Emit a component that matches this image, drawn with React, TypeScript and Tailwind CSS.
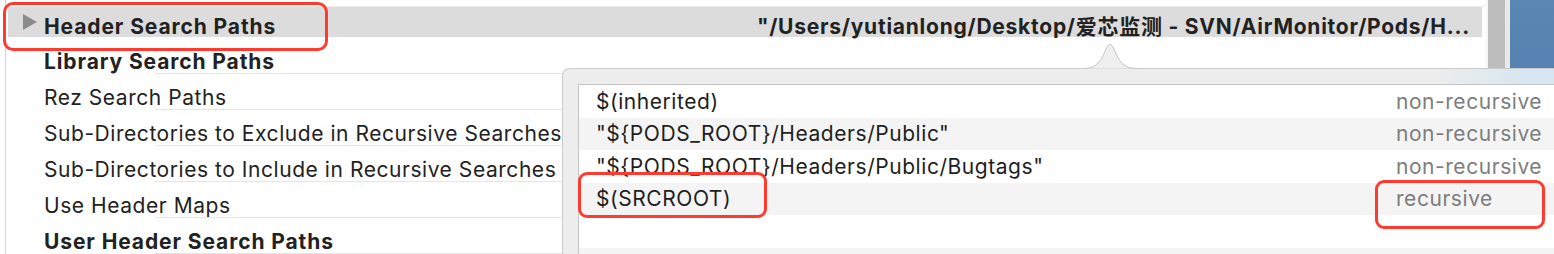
import React from 'react'

const font = 'font-[Inter,"Noto_Sans_CJK_SC",sans-serif]'

interface SettingRow {
  label: string
  bold?: boolean
}

const settingRows: SettingRow[] = [
  { label: 'Library Search Paths', bold: true },
  { label: 'Rez Search Paths' },
  { label: 'Sub-Directories to Exclude in Recursive Searches' },
  { label: 'Sub-Directories to Include in Recursive Searches' },
  { label: 'Use Header Maps' },
  { label: 'User Header Search Paths', bold: true },
]

const pathRows = [
  { value: '$(inherited)', mode: 'non-recursive' },
  { value: '"${PODS_ROOT}/Headers/Public"', mode: 'non-recursive' },
  { value: '"${PODS_ROOT}/Headers/Public/Bugtags"', mode: 'non-recursive' },
  { value: '$(SRCROOT)', mode: 'recursive' },
  { value: '', mode: '' },
  { value: '', mode: '' },
]

export default function App() {
  return (
    <div className={`relative flex h-[254px] w-[1554px] overflow-hidden bg-white text-[21px] leading-none tracking-[0.55px] text-[#222] ${font}`}>
      {/* Build settings list */}
      <div className="ml-[5px] flex w-[1481px] flex-col border-l border-[#d2d2d2] pt-[6px]">
        <div className="h-px bg-[#ececec]" />
        {/* Selected row */}
        <div className="mr-[4px] ml-[2px] flex h-[35px] items-center bg-[#dcdcdc] pr-[12px] pl-[15px]">
          <svg viewBox="0 0 14 16" className="h-[16px] w-[14px] shrink-0">
            <path d="M0 0 L14 8 L0 16 Z" fill="#8c8c8c" />
          </svg>
          <span className="mt-[9px] ml-[7px] font-bold tracking-[0.9px]">Header Search Paths</span>
          <span className="mt-[9px] ml-auto font-bold tracking-[0.75px]">"/Users/yutianlong/Desktop/爱芯监测 - SVN/AirMonitor/Pods/H...</span>
        </div>
        <div className="h-px" />
        {settingRows.map((row) => (
          <div key={row.label} className="flex flex-col">
            <div className={`flex h-[35px] items-center pt-[12px] pl-[38px] ${row.bold ? 'font-bold tracking-[0.9px]' : ''}`}>
              {row.label}
            </div>
            <div className="ml-[149px] h-px bg-[#e6e6e6]" />
          </div>
        ))}
      </div>

      {/* Scroll bar */}
      <div className="flex w-[24px]">
        <div className="w-[2px] bg-[#f6f6f6]" />
        <div className="w-[17px] bg-[#bdbdbd]" />
        <div className="w-[5px] bg-[#e9e9e9]" />
      </div>

      {/* Desktop behind the window */}
      <div className="flex-1 bg-[linear-gradient(to_bottom,#5a86b4,#4a77a6)]" />

      {/* Popover */}
      <div className="absolute top-[68px] right-0 bottom-0 left-[562px] flex flex-col rounded-tl-[8px] border-t border-l border-[#cbcbcb] bg-[linear-gradient(to_right,#ededed_0%,#ededed_88%,#d7e6f1_97%,#d7e6f1_100%)] pt-[15px] pl-[15px]">
        <div className="flex-1 border-t border-l border-[#c4c4c4] bg-white">
          {pathRows.map((row, i) => (
            <div
              key={i}
              className={`flex h-[32.5px] items-center ${i % 2 === 1 ? 'bg-[#f4f4f4]' : 'bg-white'}`}
            >
              <span className="w-[817px] shrink-0 pl-[17px] text-[#1e1e1e]">{row.value}</span>
              <span className="text-[#7d7d7d]">{row.mode}</span>
            </div>
          ))}
        </div>
      </div>

      {/* Popover arrow */}
      <svg viewBox="0 0 56 28" className="absolute top-[41px] left-[1082px] h-[28px] w-[56px]">
        <path d="M0 27.5 C10 27.5 15 25 20 17 L25 6 Q28 0.5 31 6 L36 17 C41 25 46 27.5 56 27.5 Z" fill="#efefef" />
        <path d="M0 27.5 C10 27.5 15 25 20 17 L25 6 Q28 0.5 31 6 L36 17 C41 25 46 27.5 56 27.5" fill="none" stroke="#c6c6c6" strokeWidth="1" />
      </svg>

      {/* Annotations */}
      <div className="absolute top-[2px] left-[3px] h-[49px] w-[325px] rounded-[10px] border-[3.5px] border-[#ff3b30]" />
      <div className="absolute top-[172px] left-[578px] h-[46px] w-[189px] rounded-[9px] border-[3.5px] border-[#ff3b30]" />
      <div className="absolute top-[180px] left-[1375px] h-[49px] w-[170px] rounded-[9px] border-[3.5px] border-[#ff3b30]" />
    </div>
  )
}
